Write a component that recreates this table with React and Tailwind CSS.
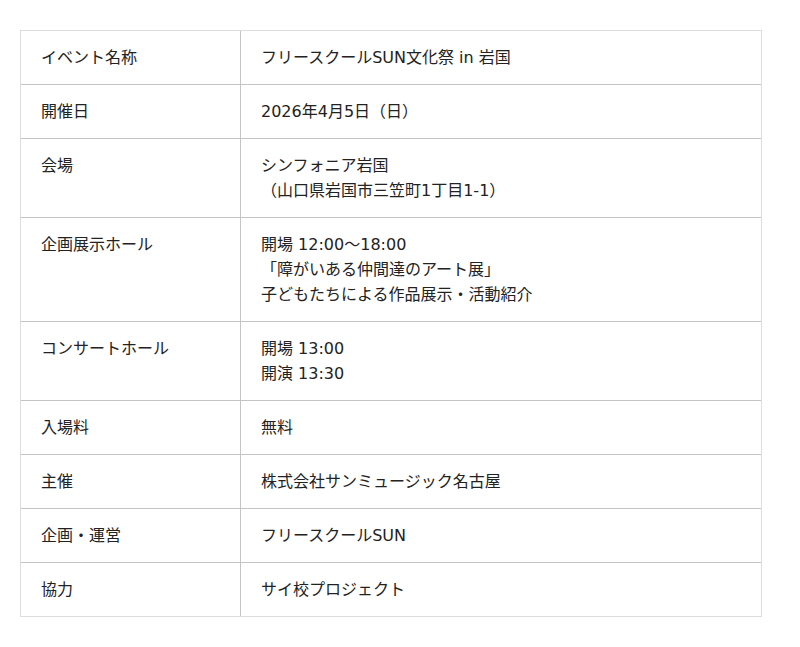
const rows = [
  { label: "イベント名称", value: ["フリースクールSUN文化祭 in 岩国"] },
  { label: "開催日", value: ["2026年4月5日（日）"] },
  { label: "会場", value: ["シンフォニア岩国", "（山口県岩国市三笠町1丁目1-1）"] },
  {
    label: "企画展示ホール",
    value: ["開場 12:00〜18:00", "「障がいある仲間達のアート展」", "子どもたちによる作品展示・活動紹介"],
  },
  { label: "コンサートホール", value: ["開場 13:00", "開演 13:30"] },
  { label: "入場料", value: ["無料"] },
  { label: "主催", value: ["株式会社サンミュージック名古屋"] },
  { label: "企画・運営", value: ["フリースクールSUN"] },
  { label: "協力", value: ["サイ校プロジェクト"] },
];

export default function App() {
  return (
    <div
      className="min-h-[647px] bg-white pt-[30px] pl-[20px] text-[16px] leading-[25px] text-[#222]"
      style={{ fontFamily: '"DejaVu Sans", "Noto Sans CJK JP", sans-serif' }}
    >
      <div className="w-[742px] border border-[#dddddd]">
        {rows.map((row, i) => (
          <div key={row.label} className={`flex ${i > 0 ? "border-t border-[#c4c4c4]" : ""}`}>
            <div className="w-[220px] shrink-0 border-r border-[#c4c4c4] px-[20px] py-[14px]">
              {row.label}
            </div>
            <div className="flex-1 px-[20px] py-[14px]">
              {row.value.map((line) => (
                <div key={line}>{line}</div>
              ))}
            </div>
          </div>
        ))}
      </div>
    </div>
  );
}
